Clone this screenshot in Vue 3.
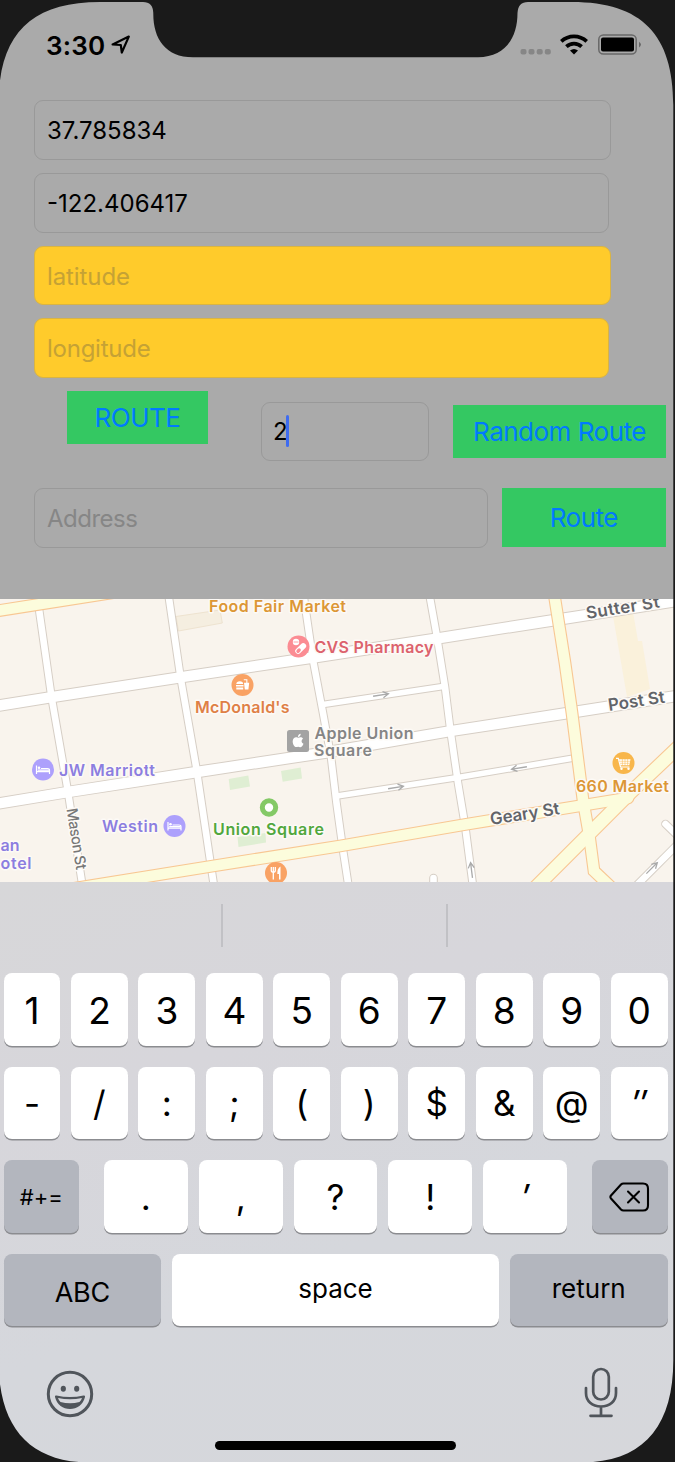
<script setup>
const digits = ['1', '2', '3', '4', '5', '6', '7', '8', '9', '0']
const symbols = ['-', '/', ':', ';', '(', ')', '$', '&', '@', '″']
const marks = ['.', ',', '?', '!', '′']
const slanted = ['″', '′']

const whiteRoads = [
  { w: 10.4, d: 'M-10 707L50 697.3L180 677.3L313 657.5L438 638.3L552 620.5L690 599' },
  { w: 10.4, d: 'M-10 805L68 792L197 772L326 752.5L448 731.5L568 713L690 694' },
  { w: 6.6, d: 'M38 602L51.5 697L68 792L82.5 886' },
  { w: 6.6, d: 'M168.500 595L180.500 677L197 772L210.500 863L214 886' },
  { w: 6.6, d: 'M303.500 595L313 660L323 713L331 757L336.500 803L343 850L348.500 886' },
  { w: 6.6, d: 'M429.500 595L437 637L445 687L450.500 731L458 783L465 825L473 886' },
  { w: 5.6, d: 'M323 704.500L443 686.500' },
  { w: 5.6, d: 'M337 796L458 777.500L574 758' },
  { w: 6.6, d: 'M433.500 878V890' },
  { w: 6.6, d: 'M665.500 824L684 842' },
  { w: 6.6, d: 'M636 886L684 838' },
]
const yellowRoads = [
  { w: 10.6, d: 'M-10 612L130 590' },
  { w: 10.6, d: 'M70 889L213 866L340 846L465 824.500L585 805L628 798' },
  { w: 10.6, d: 'M553.500 590L565 663L572 713L583 800L589.500 837L594 871L612 888' },
  { w: 12.6, d: 'M536 887L589 834L630 793L690 736' },
]
const arrows = [
  { x: 381, y: 695, r: -9 },
  { x: 396, y: 787.5, r: -9 },
  { x: 519, y: 768, r: 171 },
  { x: 471.500, y: 870, r: -97 },
  { x: 652, y: 868, r: -45 },
]
</script>

<template>
  <main class="device">
    <header class="status">
      <div class="clock">
        <span>3:30</span>
        <svg width="20" height="20" viewBox="0 0 20 20"><path d="M1.600 9.500L17.800 1.600L10.800 17.500L9.800 10Z" fill="none" stroke="#000" stroke-width="2.200" stroke-linejoin="round" /></svg>
      </div>
      <div class="indicators">
        <svg width="120" height="24" viewBox="0 0 120 24">
          <g fill="#868686">
            <rect x="0.500" y="16" width="6" height="5.600" rx="2" /><rect x="8.500" y="16" width="6" height="5.600" rx="2" /><rect x="16.700" y="16" width="6" height="5.600" rx="2" /><rect x="24.800" y="16" width="6" height="5.600" rx="2" />
          </g>
          <g fill="none" stroke="#000" stroke-width="3.700">
            <path d="M41.300 8.300A18.600 18.600 0 0 1 66.700 8.300" />
            <path d="M46.400 13.700A11 11 0 0 1 61.600 13.700" />
          </g>
          <path d="M50 17.600Q54 14.200 58 17.600L54 21.400Z" fill="#000" />
          <rect x="78.800" y="2" width="37.400" height="19" rx="4.500" fill="none" stroke="#686868" stroke-width="1.500" />
          <rect x="81" y="4.500" width="33" height="14" rx="2" fill="#000" />
          <path d="M119 8.800Q123 11.600 119 14.400Z" fill="#686868" />
        </svg>
      </div>
    </header>

    <section class="form">
      <div class="field wide"><span class="value">37.785834</span></div>
      <div class="field"><span class="value">-122.406417</span></div>
      <div class="field wide amber"><span class="hint">latitude</span></div>
      <div class="field amber"><span class="hint long">longitude</span></div>
      <div class="row random">
        <button class="btn route"><span>ROUTE</span></button>
        <div class="field count"><span class="value">2</span><i class="caret"></i></div>
        <button class="btn rnd"><span>Random Route</span></button>
      </div>
      <div class="row search">
        <div class="field address"><span class="hint addr">Address</span></div>
        <button class="btn go"><span>Route</span></button>
      </div>
    </section>

    <svg class="map" viewBox="0 599 675 282.500" width="675" height="282.500">
      <rect y="599" width="675" height="283" fill="#f9f4ed" />
      <path d="M176 616.500L220 610L222.300 623L178.500 631Z" fill="#f5eee0" stroke="#eee3d0" />
      <path d="M613 616L633 612L638 641H642L650 689L627 697Z" fill="#faf1db" />
      <path d="M228.700 779L248.300 775.500L250 786.500L230 790ZM281 771L300.700 767.500L302 778.500L282.700 781.700ZM237.500 837L265.500 833L266 842.500L238.500 847Z" fill="#dfeed3" />

      <g fill="none" stroke-linecap="round">
        <path v-for="(r, i) in whiteRoads" :key="'wc' + i" :d="r.d" stroke="#d6cec5" :stroke-width="r.w + 2" />
        <path v-for="(r, i) in whiteRoads" :key="'wf' + i" :d="r.d" stroke="#fff" :stroke-width="r.w" />
        <path v-for="(r, i) in yellowRoads" :key="'yc' + i" :d="r.d" stroke="#f8c793" :stroke-width="r.w + 2.200" />
        <path v-for="(r, i) in yellowRoads" :key="'yf' + i" :d="r.d" stroke="#fcfcdc" :stroke-width="r.w" />
      </g>
      <g fill="none" stroke="#aaa" stroke-width="1.300">
        <path v-for="(a, i) in arrows" :key="i" d="M-8 0H7M2 -3L7.500 0L2 3" :transform="`translate(${a.x} ${a.y}) rotate(${a.r})`" />
      </g>

      <g class="labels">
        <text x="209" y="612" fill="#dc9736" textLength="137">Food Fair Market</text>
        <text x="314.500" y="652.500" fill="#dc626d" textLength="119">CVS Pharmacy</text>
        <text x="195" y="713" fill="#df8046" textLength="94.500">McDonald's</text>
        <text x="314.500" y="739" fill="#858585" textLength="99">Apple Union</text>
        <text x="314" y="756" fill="#858585" textLength="58">Square</text>
        <text x="59" y="775.500" fill="#8c7ee0" textLength="96">JW Marriott</text>
        <text x="102" y="832" fill="#8c7ee0" textLength="56">Westin</text>
        <text x="0.500" y="851" fill="#8c7ee0" textLength="19">an</text>
        <text x="0.500" y="868.500" fill="#8c7ee0" textLength="31">otel</text>
        <text x="213" y="835" fill="#51a73d" textLength="111">Union Square</text>
        <text x="576" y="792" fill="#dc9736" textLength="93">660 Market</text>
        <g class="street">
          <text transform="translate(587 619) rotate(-9)" textLength="74">Sutter St</text>
          <text transform="translate(609 711) rotate(-8.500)" textLength="57">Post St</text>
          <text transform="translate(491 825) rotate(-9)" textLength="70">Geary St</text>
        </g>
        <text class="minor" transform="translate(66.500 809) rotate(81)" textLength="62">Mason St</text>
      </g>

      <!-- pharmacy -->
      <circle cx="298.500" cy="646.500" r="11" fill="#fb8c93" />
      <g fill="#fff"><circle cx="296" cy="642" r="3.200" /><path d="M293.500 642H298.500" stroke="#fb8c93" stroke-width=".8" /></g>
      <g transform="translate(300.700 648.500) rotate(-45)"><rect x="-6.500" y="-2.900" width="13" height="5.800" rx="2.900" fill="#fff" /><rect x="-5.500" y="-1.700" width="5" height="3.400" rx="1.700" fill="#fb8c93" /></g>
      <!-- burger -->
      <circle cx="242.500" cy="685" r="11" fill="#f9a264" />
      <g fill="#fff"><path d="M236.300 684Q236.500 681.200 239.800 681.200Q243 681.200 243.200 684ZM236 685H243.500V686.600H236ZM236.300 687.600H243.200V689.500H236.300ZM244 682.800H249.200L248.400 689.500H244.800ZM246.300 683V680.300H243.800V679.300H247.400V683Z" /></g>
      <!-- apple store -->
      <rect x="287" y="730" width="22" height="22" rx="2.500" fill="#a3a3a3" />
      <path d="M298.200 737.700C300 736.900 302.200 737 303 738.700C301 740 301.200 742.800 303.500 743.700C302.500 746.400 301 747.700 299.300 746.900Q298.200 746.500 297 746.900C294.500 748 292.500 744 292.700 741C292.900 738.300 295.300 736.500 297.500 737.600ZM297.900 737C297.900 735 299.200 734 300.700 733.800C300.800 735.700 299.600 736.900 297.900 737Z" fill="#fff" />
      <!-- hotels -->
      <g v-for="(p, i) in [[43, 769.5], [174.5, 826]]" :key="'h' + i" :transform="`translate(${p[0]} ${p[1]})`">
        <circle r="11" fill="#ada0fc" />
        <path d="M-6.500 -4V4.500M-6.500 2.200H6.500M6.500 4.500V1Q6.500 -1 4.500 -1H-2" fill="none" stroke="#fff" stroke-width="1.200" />
        <path d="M-5.300 1.300V0H6V1.300Z" fill="#fff" /><circle cx="-4" cy="-1.700" r="1.300" fill="#fff" />
      </g>
      <circle cx="269" cy="807.500" r="6.700" fill="#fff" stroke="#84c966" stroke-width="5" />
      <!-- restaurant -->
      <circle cx="276" cy="873" r="11" fill="#f9a264" />
      <path d="M271.300 867V870.500Q271.300 872.300 273.300 872.300Q275.300 872.300 275.300 870.500V867M273.300 867V879.500" fill="none" stroke="#fff" stroke-width="1.300" />
      <path d="M280.500 866.500V879.500H279V874H277.300Q277 868.500 280.500 866.500Z" fill="#fff" />
      <!-- market -->
      <circle cx="623.500" cy="763" r="11" fill="#f8b64b" />
      <path d="M616 758.300H618.300L620.500 767H629.500" fill="none" stroke="#fff" stroke-width="1.200" />
      <path d="M619 759.300H630.500L629.300 765.200H620.400Z" fill="#fff" />
      <path d="M619.500 761.300H630M620 763.300H629.500M622.400 759V765.500M625 759V765.500M627.600 759V765.500" stroke="#f8b64b" stroke-width=".5" />
      <circle cx="621.500" cy="768.700" r="1.200" fill="#fff" /><circle cx="628.500" cy="768.700" r="1.200" fill="#fff" />
    </svg>

    <section class="keyboard">
      <div class="suggest"><i></i><i></i><i></i></div>
      <div class="keys ten">
        <div v-for="k in digits" :key="k" class="key num">{{ k }}</div>
      </div>
      <div class="keys ten">
        <div v-for="k in symbols" :key="k" class="key sym" :class="{ slant: slanted.includes(k) }">{{ k }}</div>
      </div>
      <div class="keys third">
        <div class="key dark more"><span>#+=</span></div>
        <div class="marks"><div v-for="k in marks" :key="k" class="key sym" :class="{ slant: slanted.includes(k) }">{{ k }}</div></div>
        <div class="key dark del">
          <svg width="42" height="32" viewBox="0 0 42 32"><g fill="none" stroke="#000" stroke-width="2.100" stroke-linejoin="round" stroke-linecap="round"><path d="M14.500 2.500H34Q39 2.500 39 7.500V24.500Q39 29.500 34 29.500H14.500Q13 29.500 12 28.500L2 17.500Q.8 16 2 14.500L12 3.500Q13 2.500 14.500 2.500Z" /><path d="M19 10.500L30 21.500M30 10.500L19 21.500" /></g></svg>
        </div>
      </div>
      <div class="keys fourth">
        <div class="key dark abc"><span>ABC</span></div>
        <div class="key word"><span>space</span></div>
        <div class="key dark word"><span>return</span></div>
      </div>
      <div class="tools">
        <svg width="48" height="48" viewBox="0 0 48 48">
          <circle cx="24" cy="24" r="21.700" fill="none" stroke="#50555b" stroke-width="3" />
          <ellipse cx="17.300" cy="18.800" rx="2.600" ry="3" fill="#50555b" /><ellipse cx="30.700" cy="18.800" rx="2.600" ry="3" fill="#50555b" />
          <path d="M10.500 25.500Q24 28.500 37.500 25.500Q39.500 25 39 27C37 35 31 39 24 39C17 39 11 35 9 27Q8.500 25 10.500 25.500Z" fill="#50555b" />
          <path d="M12 28Q24 30.500 36 28Q35.200 30.500 33.500 32Q24 34.500 14.500 32Q12.800 30.500 12 28Z" fill="#d6d7dc" />
        </svg>
        <svg width="36" height="52" viewBox="0 0 36 52">
          <g fill="none" stroke="#50555b" stroke-width="2.700" stroke-linecap="round"><rect x="10.200" y="2" width="15.600" height="30.500" rx="7.800" /><path d="M3 21V26C3 34 9 39.500 18 39.500S33 34 33 26V21M18 40V48.500M7.500 48.800H28.500" /></g>
        </svg>
      </div>
      <div class="home"></div>
    </section>

    <svg class="bezel" width="675" height="1462" viewBox="0 0 675 1462">
      <path fill="#1a1a1a" fill-rule="evenodd" d="M-5 -5H680V1467H-5ZM-1.500 105C-1.500 35 30 2 100 2H143Q153 2 153.300 13C153 38 165 57 193 57.300H478C505 57 517.500 38 517.500 13Q518 2 528 2H572C642 2 673.300 35 673.300 105V1360C673.300 1428 642 1462 582 1462.500H90C30 1462 -1.500 1428 -1.500 1360Z" />
    </svg>
  </main>
</template>

<style>
body { background: #1a1a1a; }
</style>

<style scoped>
.device { position: relative; width: 675px; height: 1462px; overflow: hidden; background: #aaa; font-family: Inter, "Liberation Sans", sans-serif; color: #000; display: flex; flex-direction: column; }
.bezel { position: absolute; inset: 0; }
.status { height: 100px; flex: none; display: flex; justify-content: space-between; padding: 0 30px 0 46px; box-sizing: border-box; }
.clock { display: flex; margin-top: 28.500px; height: 34px; font-weight: 600; font-size: 26px; line-height: 34px; gap: 6px; }
.clock span { width: 59px; letter-spacing: .2px; white-space: nowrap; }
.clock svg { margin-top: 6px; }
.indicators { margin-top: 33px; width: 125px; }
.indicators svg { overflow: visible; }
.form { height: 499px; flex: none; display: flex; flex-direction: column; gap: 13px; padding: .4px 0 0 34px; box-sizing: border-box; }
.field { width: 575px; height: 59.700px; box-sizing: border-box; border: 1px solid #999; border-radius: 9px; display: flex; align-items: center; padding: 1px 0 0 12px; font-size: 24px; flex: none; }
.wide { width: 577px; }
.amber { background: #ffcb2b; border-color: #d9b443; }
.amber .hint { color: #c5a235; }
.hint { color: #868686; letter-spacing: -.1px; }
.long { letter-spacing: -.25px; }
.addr { letter-spacing: -.5px; }
.row { display: flex; align-items: flex-start; flex: none; }
.random { height: 84px; padding-left: 33px; }
.btn { border: 0; padding: 0; background: #34c862; color: #007aff; font-family: inherit; font-size: 26px; height: 52.500px; flex: none; letter-spacing: -.5px; }
.route { width: 141px; }
.count { width: 168px; margin: 10.500px 24px 0 53px; height: 59px; }
.count .value { margin-left: -1px; }
.caret { width: 3.500px; height: 32px; border-radius: 2px; background: #3f6cf0; margin-left: -2px; margin-top: -1px; }
.rnd { width: 213px; margin-top: 14px; }
.address { width: 454px; }
.go { width: 164.500px; height: 59px; margin-left: 13.600px; }
.map { display: block; flex: none; }
.labels { font-size: 16px; font-weight: 600; paint-order: stroke; stroke: #fdfaf6; stroke-width: 3px; stroke-linejoin: round; }
.street { fill: #626469; font-size: 17px; font-weight: 600; }
.minor { fill: #777; font-weight: 500; font-size: 15px; }
.keyboard { flex: 1; background: linear-gradient(160deg, #d7d7d9 0%, #d7d6db 30%, #d5d7dc 60%, #d6d7db 100%); display: flex; flex-direction: column; padding: 0 7.500px 0 3.500px; }
.suggest { height: 91.800px; flex: none; display: flex; margin: 0 -7px 0 -4px; }
.suggest i { height: 43px; margin-top: 22.500px; width: 225px; box-sizing: border-box; border-right: 2px solid #c1c1c5; }
.suggest i:first-child { width: 223px; }
.suggest i:last-child { border: 0; }
.keys { height: 72.500px; flex: none; margin-bottom: 21px; display: flex; }
.ten { gap: 10.500px; }
.key { background: #fff; border-radius: 8px; box-shadow: 0 1.500px 0 #8b8c90; display: flex; align-items: center; justify-content: center; flex: 1; min-width: 0; font-size: 37px; box-sizing: border-box; }
.num { padding-top: 2px; }
.dark { background: #b3b6be; }
.sym { font-size: 35px; }
.slant { font-style: italic; }
.more { flex: none; width: 75.500px; font-size: 22px; }
.del { flex: none; width: 75.500px; }
.marks { flex: 1; display: flex; gap: 11px; margin: 0 25px; }
.fourth { gap: 11px; }
.abc { flex: none; width: 157.500px; font-size: 27px; padding-top: 4px; letter-spacing: -.3px; }
.word { font-size: 26px; padding-bottom: 4px; }
.dark.word { flex: none; width: 157.500px; }
.tools { height: 93.500px; box-sizing: border-box; flex: none; display: flex; justify-content: space-between; align-items: flex-start; padding: 22px 49px 0 42px; }
.tools svg:first-child { margin-top: .5px; }
.tools svg:last-child { margin-top: -2px; }
.home { width: 241px; height: 9px; border-radius: 5px; background: #000; margin: 0 auto; flex: none; }
</style>
